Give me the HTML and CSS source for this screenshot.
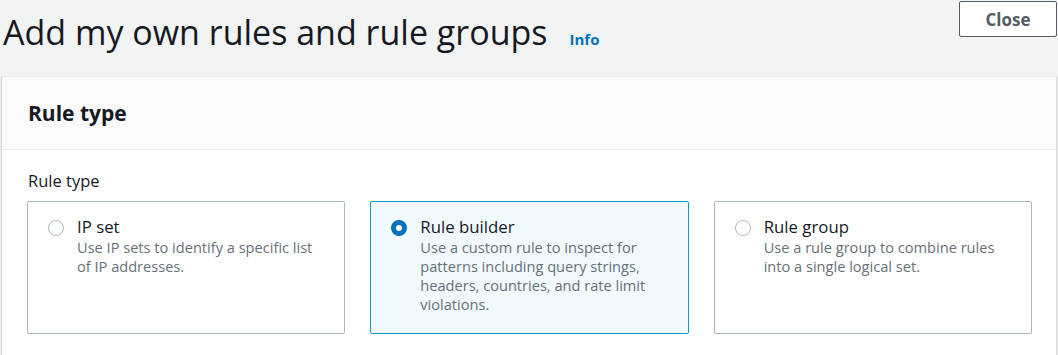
FILE: index.html
```html
<!DOCTYPE html>
<html lang="en">
<head>
  <meta charset="UTF-8" />
  <title>Add my own rules and rule groups</title>
  <link rel="stylesheet" href="styles.css">
</head>
<body>
  <div class="page-header">
    <div class="title-wrap">
      <h1>Add my own rules and rule groups</h1>
      <a href="#" class="info-link">Info</a>
    </div>
    <button class="btn-close">Close</button>
  </div>

  <div class="panel">
    <div class="panel-head">
      <h2>Rule type</h2>
    </div>
    <div class="panel-body">
      <div class="field-label">Rule type</div>
      <div class="tiles">
        <label class="tile">
          <span class="radio"></span>
          <span class="tile-text">
            <span class="tile-title">IP set</span>
            <span class="tile-desc">Use IP sets to identify a specific list of IP addresses.</span>
          </span>
        </label>
        <label class="tile selected">
          <span class="radio checked"></span>
          <span class="tile-text">
            <span class="tile-title">Rule builder</span>
            <span class="tile-desc">Use a custom rule to inspect for patterns including query strings, headers, countries, and rate limit violations.</span>
          </span>
        </label>
        <label class="tile">
          <span class="radio"></span>
          <span class="tile-text">
            <span class="tile-title">Rule group</span>
            <span class="tile-desc">Use a rule group to combine rules into a single logical set.</span>
          </span>
        </label>
      </div>
    </div>
  </div>
</body>
</html>
```

FILE: styles.css
```css
body {
  margin: 0;
  padding: 0 1px;
  background: #f2f3f3;
  font-family: "Open Sans", "Noto Sans", Arial, sans-serif;
  color: #16191f;
  overflow: hidden;
}
.page-header {
  display: flex;
  justify-content: space-between;
  align-items: flex-start;
  height: 76px;
}
.title-wrap {
  display: flex;
  align-items: baseline;
  padding-left: 2px;
}
h1 {
  font-size: 34px;
  font-weight: 400;
  margin: 10px 0 0;
  line-height: 44px;
}
.info-link {
  margin-left: 22px;
  font-size: 15px;
  font-weight: bold;
  color: #0073bb;
  text-decoration: none;
}
.btn-close {
  margin-top: 1px;
  width: 98px;
  height: 36px;
  background: #fff;
  border: 1px solid #545b64;
  border-radius: 2px;
  color: #545b64;
  font-family: inherit;
  font-size: 17px;
  font-weight: bold;
  padding: 0;
}
.panel {
  background: #fff;
  border: 1px solid #d5dbdb;
  border-top-color: #eaeded;
  box-shadow: 0 1px 1px rgba(0, 28, 36, 0.15);
}
.panel-head {
  background: #fafafa;
  height: 72px;
  border-bottom: 1px solid #eaeded;
  display: flex;
  align-items: center;
  padding: 0 26px;
}
h2 {
  margin: 0;
  font-size: 21px;
  font-weight: bold;
}
.panel-body {
  padding: 20px 24px 26px 25px;
}
.field-label {
  font-size: 16.5px;
  line-height: 22px;
  margin-left: 1px;
  margin-bottom: 9px;
}
.tiles {
  display: grid;
  grid-template-columns: repeat(3, 1fr);
  gap: 25px;
}
.tile {
  display: flex;
  align-items: flex-start;
  gap: 13px;
  height: 133px;
  box-sizing: border-box;
  padding: 14px 20px;
  border: 1px solid #aab7b8;
  border-radius: 2px;
  background: #fff;
}
.tile.selected {
  border-color: #00a1c9;
  background: #f1faff;
}
.radio {
  flex: none;
  width: 16px;
  height: 16px;
  box-sizing: border-box;
  border: 1.5px solid #aab7b8;
  border-radius: 50%;
  margin-top: 4px;
  background: #fff;
}
.radio.checked {
  border: 5px solid #0073bb;
}
.tile-text {
  display: flex;
  flex-direction: column;
}
.tile-title {
  font-size: 16.8px;
  line-height: 22px;
}
.tile-desc {
  font-size: 14.6px;
  line-height: 19px;
  color: #687078;
}
```
